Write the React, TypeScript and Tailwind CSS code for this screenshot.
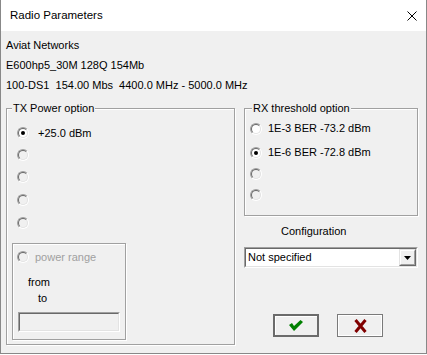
import React from "react";

const Radio = ({ checked = false, disabled = false }: { checked?: boolean; disabled?: boolean }) => (
  <span className="w-[12px] h-[12px] shrink-0 rounded-full border border-t-[#a0a0a0] border-l-[#a0a0a0] border-r-white border-b-white flex">
    <span
      className={`flex-1 rounded-full border border-t-[#696969] border-l-[#696969] border-r-[#e3e3e3] border-b-[#e3e3e3] flex items-center justify-center ${
        disabled ? "bg-[#f0f0f0]" : "bg-white"
      }`}
    >
      {checked && <span className="w-[4px] h-[4px] rounded-full bg-black" />}
    </span>
  </span>
);

const Sunken = ({ className, children }: { className?: string; children?: React.ReactNode }) => (
  <div className={`flex border border-t-[#a0a0a0] border-l-[#a0a0a0] border-r-white border-b-white ${className ?? ""}`}>
    <div className="flex flex-1 border border-t-[#696969] border-l-[#696969] border-r-[#e3e3e3] border-b-[#e3e3e3]">
      {children}
    </div>
  </div>
);

const etched = "border border-[#a0a0a0] shadow-[inset_1px_1px_0_white,1px_1px_0_white]";

const App = () => {
  const txRows = ["+25.0 dBm", "", "", "", ""];
  const rxRows = [
    { label: "1E-3 BER -73.2 dBm", checked: false, disabled: false },
    { label: "1E-6 BER -72.8 dBm", checked: true, disabled: false },
    { label: "", checked: false, disabled: true },
    { label: "", checked: false, disabled: true },
  ];

  return (
    <div className="w-[427px] h-[354px] flex flex-col bg-[#f0f0f0] border-x border-b border-[#888888] font-['Liberation_Sans',Arial,sans-serif] text-[11px] text-black">
      {/* title bar */}
      <div className="h-[31px] bg-white flex items-center justify-between pl-[9px] pr-[9px]">
        <span className="text-[11.5px]">Radio Parameters</span>
        <svg width="10" height="10" viewBox="0 0 10 10">
          <path d="M0.5 0.5 L9.5 9.5 M9.5 0.5 L0.5 9.5" stroke="#000" strokeWidth="1" />
        </svg>
      </div>

      <div className="flex-1 flex flex-col px-[5px] pt-[4px]">
        <div className="h-[20px] leading-[20px]">Aviat Networks</div>
        <div className="h-[20px] leading-[20px]">E600hp5_30M 128Q 154Mb</div>
        <div className="h-[20px] leading-[20px] whitespace-pre">100-DS1  154.00 Mbs  4400.0 MHz - 5000.0 MHz</div>

        <div className="flex mt-[6px] gap-[9px] items-start">
          {/* TX power */}
          <fieldset className={`w-[229px] ${etched} px-[5px] pt-[7px] pb-[4px]`}>
            <legend className="px-[1px] leading-[14px] bg-[#f0f0f0]">TX Power option</legend>
            {txRows.map((label, i) => (
              <div
                key={i}
                className={`h-[22px] flex items-center gap-[9px] pl-[5px] ${i >= 3 ? "mt-[1px]" : ""}`}
              >
                <Radio checked={i === 0} disabled={i > 0} />
                <span>{label}</span>
              </div>
            ))}
            <div className={`mt-[9px] w-[114px] h-[97px] ${etched} flex flex-col pt-[6px]`}>
              <div className="h-[14px] flex items-center gap-[6px] pl-[4px]">
                <Radio disabled />
                <span className="text-[#a0a0a0]">power range</span>
              </div>
              <div className="mt-[11px] h-[14px] leading-[14px] pl-[15px]">from</div>
              <div className="mt-[2px] h-[14px] leading-[14px] pl-[25px]">to</div>
              <Sunken className="mt-[7px] ml-[5px] w-[102px] h-[20px]">
                <div className="flex-1 bg-[#f0f0f0]" />
              </Sunken>
            </div>
          </fieldset>

          {/* right column */}
          <div className="w-[174px] flex flex-col">
            <fieldset className={`${etched} pl-[5px] pt-[3px] pb-[10px]`}>
              <legend className="ml-[2px] px-[1px] leading-[14px] bg-[#f0f0f0]">RX threshold option</legend>
              {rxRows.map((r, i) => (
                <div key={i} className={`h-[21px] flex items-center gap-[6px] ${i === 1 ? "mt-[3px]" : ""}`}>
                  <Radio checked={r.checked} disabled={r.disabled} />
                  <span>{r.label}</span>
                </div>
              ))}
            </fieldset>

            <div className="mt-[8px] h-[14px] leading-[14px] pl-[37px]">Configuration</div>

            <Sunken className="mt-[9px] h-[21px]">
              <div className="flex-1 bg-white flex items-center pl-[2px]">Not specified</div>
              <div className="w-[17px] flex border border-t-[#e3e3e3] border-l-[#e3e3e3] border-r-[#696969] border-b-[#696969] bg-white">
                <div className="flex-1 flex items-center justify-center bg-[#f0f0f0] border border-t-white border-l-white border-r-[#a0a0a0] border-b-[#a0a0a0]">
                  <svg width="7" height="4" viewBox="0 0 7 4">
                    <path d="M0 0 H7 L3.5 4 Z" fill="#000" />
                  </svg>
                </div>
              </div>
            </Sunken>

            <div className="mt-[46px] flex gap-[18px] pl-[29px]">
              <button className="w-[46px] h-[23px] border-2 border-[#6b6b6b] shadow-[inset_1px_1px_0_white] bg-[#f0f0f0] flex items-center justify-center">
                <svg width="14" height="11" viewBox="0 0 14 11">
                  <path d="M0 5 L3 3 L5 6 L11.5 0 L14 2 L5 11 Z" fill="#008000" />
                </svg>
              </button>
              <button className="w-[46px] h-[23px] border border-[#7a7a7a] shadow-[inset_1px_1px_0_white,inset_-1px_-1px_0_white] bg-[#f0f0f0] flex items-center justify-center">
                <svg width="13" height="14" viewBox="0 0 13 14">
                  <path d="M1.5 1 L11.5 13 M11.5 1 L1.5 13" stroke="#800000" strokeWidth="3" />
                </svg>
              </button>
            </div>
          </div>
        </div>
      </div>
    </div>
  );
};

export default App;
